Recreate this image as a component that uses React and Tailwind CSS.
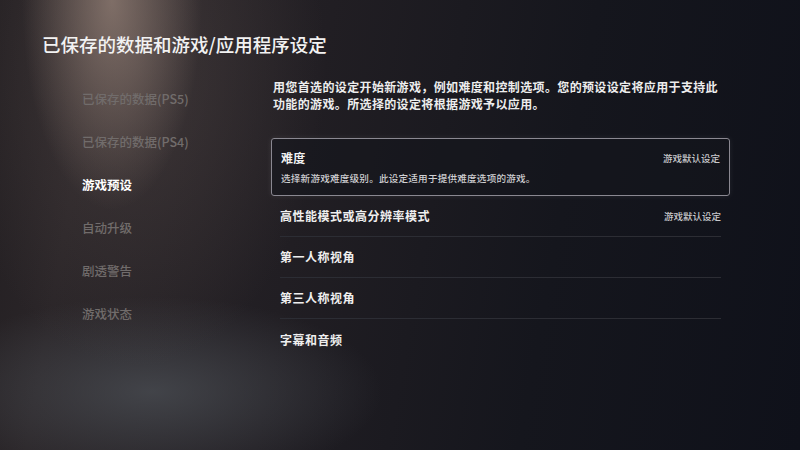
import React from 'react';

const navItems = [
    { id: 1, label: '已保存的数据(PS5)' },
    { id: 2, label: '已保存的数据(PS4)' },
    { id: 3, label: '游戏预设', active: true },
    { id: 4, label: '自动升级' },
    { id: 5, label: '剧透警告' },
    { id: 6, label: '游戏状态' },
];

const rows = [
    { id: 1, label: '高性能模式或高分辨率模式', value: '游戏默认设定' },
    { id: 2, label: '第一人称视角' },
    { id: 3, label: '第三人称视角' },
    { id: 4, label: '字幕和音频' },
];

const font = "font-['Noto_Sans_CJK_SC','Noto_Sans',sans-serif]";

const App = () => {
    return (
        <div
            className={`${font} w-[800px] h-[450px] overflow-hidden text-white bg-[#16171d] bg-[radial-gradient(ellipse_90px_210px_at_14%_0%,rgba(150,130,120,0.75),transparent),radial-gradient(ellipse_190px_300px_at_17%_15%,rgba(90,78,76,0.45),transparent),radial-gradient(ellipse_230px_95px_at_19%_87%,rgba(78,82,88,0.7),transparent),linear-gradient(100deg,#231f22_0%,#2a2528_12%,#211e23_38%,#15161d_68%,#0f111a_100%)]`}
        >
            {/* Page title */}
            <h1 className="pl-[42px] pt-[31px] text-[18.5px] leading-[26px] font-medium text-[#f2f2f2]">
                已保存的数据和游戏/应用程序设定
            </h1>

            <div className="flex mt-[21px] pl-[82px]">
                {/* Side menu */}
                <ul className="w-[189px] shrink-0">
                    {navItems.map((item) => (
                        <li
                            key={item.id}
                            className={`h-[43px] flex items-center text-[12.5px] ${
                                item.active ? 'text-white font-bold' : 'text-[#716c6b] font-medium'
                            }`}
                        >
                            {item.label}
                        </li>
                    ))}
                </ul>

                {/* Settings panel */}
                <div className="w-[459px]">
                    <p className="w-[452px] pl-[2px] text-[12px] leading-[17px] tracking-[0.36px] font-semibold text-[#ededed]">
                        用您首选的设定开始新游戏，例如难度和控制选项。您的预设设定将应用于支持此功能的游戏。所选择的设定将根据游戏予以应用。
                    </p>

                    {/* Focused item */}
                    <div className="mt-[26px] h-[58px] border border-[#8a8891] rounded-[3px] bg-[#14151c]/60 shadow-[0_0_6px_rgba(255,255,255,0.08)] px-[9px] pt-[10px]">
                        <div className="flex justify-between items-center h-[18px]">
                            <span className="text-[12px] font-bold tracking-[0.3px] text-[#f2f2f2]">难度</span>
                            <span className="text-[9.5px] font-medium text-[#c9c9cc]">游戏默认设定</span>
                        </div>
                        <div className="mt-[4px] h-[14px] flex items-center text-[9.6px] tracking-[0.2px] font-medium text-[#cfcfd2]">
                            选择新游戏难度级别。此设定适用于提供难度选项的游戏。
                        </div>
                    </div>

                    <div className="mx-[9px]">
                        {rows.map((row, i) => (
                            <div
                                key={row.id}
                                className={`h-[41px] flex items-center justify-between ${
                                    i < rows.length - 1 ? 'border-b border-[#2c2d34]' : ''
                                }`}
                            >
                                <span className="text-[12px] font-bold tracking-[0.5px] text-[#efefef]">{row.label}</span>
                                {row.value && (
                                    <span className="text-[9.5px] font-medium text-[#c9c9cc]">{row.value}</span>
                                )}
                            </div>
                        ))}
                    </div>
                </div>
            </div>
        </div>
    );
};

export default App;
